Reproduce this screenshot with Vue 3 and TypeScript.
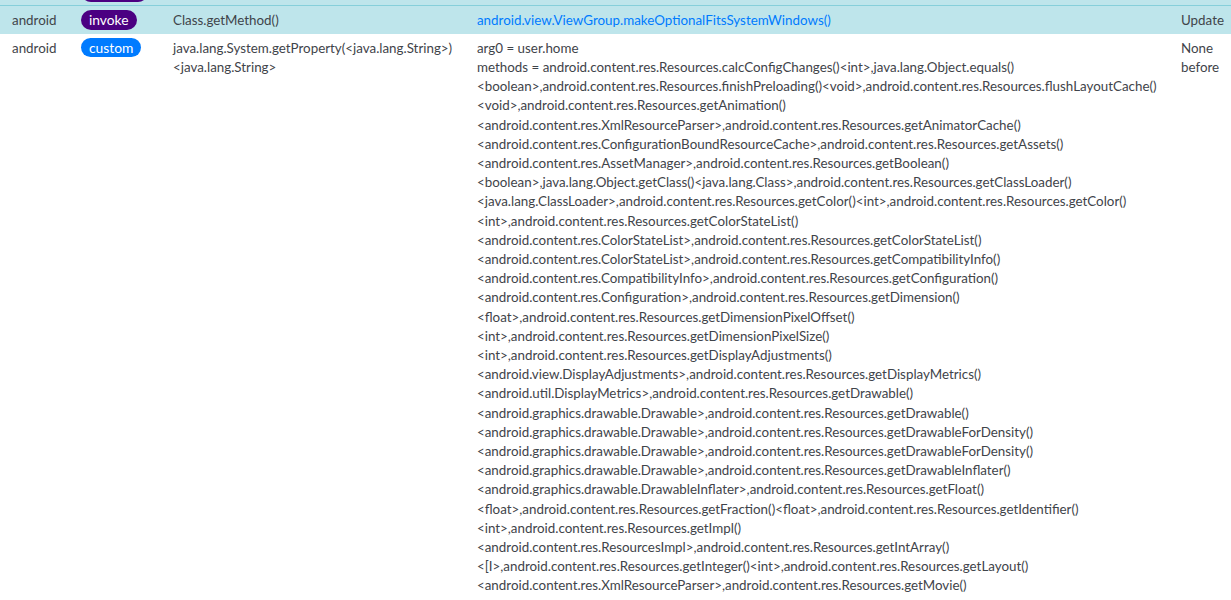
<script setup lang="ts">
interface Row {
  source: string
  kind: string
  target: string[]
  detail: string[]
  link: boolean
  action: string[]
  active: boolean
}

const methodLines: string[] = [
  'arg0 = user.home',
  'methods = android.content.res.Resources.calcConfigChanges()<int>,java.lang.Object.equals()',
  '<boolean>,android.content.res.Resources.finishPreloading()<void>,android.content.res.Resources.flushLayoutCache()',
  '<void>,android.content.res.Resources.getAnimation()',
  '<android.content.res.XmlResourceParser>,android.content.res.Resources.getAnimatorCache()',
  '<android.content.res.ConfigurationBoundResourceCache>,android.content.res.Resources.getAssets()',
  '<android.content.res.AssetManager>,android.content.res.Resources.getBoolean()',
  '<boolean>,java.lang.Object.getClass()<java.lang.Class>,android.content.res.Resources.getClassLoader()',
  '<java.lang.ClassLoader>,android.content.res.Resources.getColor()<int>,android.content.res.Resources.getColor()',
  '<int>,android.content.res.Resources.getColorStateList()',
  '<android.content.res.ColorStateList>,android.content.res.Resources.getColorStateList()',
  '<android.content.res.ColorStateList>,android.content.res.Resources.getCompatibilityInfo()',
  '<android.content.res.CompatibilityInfo>,android.content.res.Resources.getConfiguration()',
  '<android.content.res.Configuration>,android.content.res.Resources.getDimension()',
  '<float>,android.content.res.Resources.getDimensionPixelOffset()',
  '<int>,android.content.res.Resources.getDimensionPixelSize()',
  '<int>,android.content.res.Resources.getDisplayAdjustments()',
  '<android.view.DisplayAdjustments>,android.content.res.Resources.getDisplayMetrics()',
  '<android.util.DisplayMetrics>,android.content.res.Resources.getDrawable()',
  '<android.graphics.drawable.Drawable>,android.content.res.Resources.getDrawable()',
  '<android.graphics.drawable.Drawable>,android.content.res.Resources.getDrawableForDensity()',
  '<android.graphics.drawable.Drawable>,android.content.res.Resources.getDrawableForDensity()',
  '<android.graphics.drawable.Drawable>,android.content.res.Resources.getDrawableInflater()',
  '<android.graphics.drawable.DrawableInflater>,android.content.res.Resources.getFloat()',
  '<float>,android.content.res.Resources.getFraction()<float>,android.content.res.Resources.getIdentifier()',
  '<int>,android.content.res.Resources.getImpl()',
  '<android.content.res.ResourcesImpl>,android.content.res.Resources.getIntArray()',
  '<[I>,android.content.res.Resources.getInteger()<int>,android.content.res.Resources.getLayout()',
  '<android.content.res.XmlResourceParser>,android.content.res.Resources.getMovie()',
]

const rows: Row[] = [
  {
    source: 'android',
    kind: 'invoke',
    target: ['Class.getMethod()'],
    detail: ['android.view.ViewGroup.makeOptionalFitsSystemWindows()'],
    link: true,
    action: ['Update'],
    active: true,
  },
  {
    source: 'android',
    kind: 'custom',
    target: ['java.lang.System.getProperty(<java.lang.String>)', '<java.lang.String>'],
    detail: methodLines,
    link: false,
    action: ['None', 'before'],
    active: false,
  },
]
</script>

<template>
  <div class="viewport">
    <div class="scrolled-row">
      <span class="stub-pill"></span>
    </div>
    <table class="log">
      <colgroup>
        <col class="c1" />
        <col class="c2" />
        <col class="c3" />
        <col class="c4" />
        <col class="c5" />
      </colgroup>
      <tbody>
        <tr v-for="(row, i) in rows" :key="i" :class="{ active: row.active }">
          <td class="first">{{ row.source }}</td>
          <td><span class="badge" :class="row.kind === 'custom' ? 'blue' : 'indigo'">{{ row.kind }}</span></td>
          <td><div v-for="(l, j) in row.target" :key="j">{{ l }}</div></td>
          <td>
            <div v-for="(l, j) in row.detail" :key="j" :class="{ link: row.link }">{{ l }}</div>
          </td>
          <td><div v-for="(l, j) in row.action" :key="j">{{ l }}</div></td>
        </tr>
      </tbody>
    </table>
  </div>
</template>

<style>
html, body { margin: 0; overflow: hidden; background: #fff; }
</style>

<style scoped>
.viewport {
  height: 600px;
  overflow: hidden;
}
/* the row scrolled almost out of view: only the foot of its pill still shows */
.scrolled-row {
  height: 6px;
  padding-left: 81px;
  box-sizing: border-box;
  background: #bee5eb;
  border-bottom: 1px solid #86cfda;
  overflow: hidden;
  display: flex;
  align-items: flex-end;
}
.stub-pill {
  flex: none;
  width: 67px;
  height: 20px;
  margin-bottom: 3.5px;
  border-radius: 160px;
  background: #4b0082;
}
.log {
  width: 1231px;
  table-layout: fixed;
  border-collapse: collapse;
  font-family: "Lato", sans-serif;
  font-size: 13.37px;
  line-height: 19.2px;
  color: #3f444a;
}
.c1 { width: 76.2px; }
.c2 { width: 92px; }
.c3 { width: 304px; }
.c4 { width: 704px; }
.c5 { width: 54.8px; }
td {
  padding: 4.8px;
  vertical-align: top;
  white-space: nowrap;
}
td.first { padding-left: 12px; }
.active td {
  background: #bee5eb;
  padding-top: 5px;
  padding-bottom: 3.8px;
}
.link { color: #007bff; }
.badge {
  display: block;
  width: fit-content;
  padding: 3.2px 8px;
  font-size: 13.8px;
  line-height: 13.6px;
  color: #fff;
  border-radius: 160px;
}
.indigo {
  margin: -1px 0 0.2px;
  background: #4b0082;
}
.blue {
  margin: -0.4px 0 0.6px;
  padding-top: 2.7px;
  padding-bottom: 2.7px;
  background: #007bff;
}
</style>
